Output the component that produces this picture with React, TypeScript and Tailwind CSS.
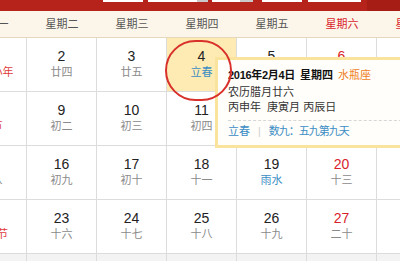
import React from 'react';

type Day = {
  n: number;
  lunar: string;
  kind?: 'fest' | 'term';
  weekend?: boolean;
  selected?: boolean;
  other?: boolean;
};

const weekdays = ['星期一', '星期二', '星期三', '星期四', '星期五', '星期六', '星期日'];

const rows: Day[][] = [
  [
    { n: 1, lunar: '北方小年', kind: 'fest' },
    { n: 2, lunar: '廿四' },
    { n: 3, lunar: '廿五' },
    { n: 4, lunar: '立春', kind: 'term', selected: true },
    { n: 5, lunar: '廿七' },
    { n: 6, lunar: '廿八', weekend: true },
    { n: 7, lunar: '除夕', kind: 'fest', weekend: true },
  ],
  [
    { n: 8, lunar: '春节', kind: 'fest' },
    { n: 9, lunar: '初二' },
    { n: 10, lunar: '初三' },
    { n: 11, lunar: '初四' },
    { n: 12, lunar: '初五' },
    { n: 13, lunar: '初六', weekend: true },
    { n: 14, lunar: '情人节', kind: 'fest', weekend: true },
  ],
  [
    { n: 15, lunar: '初八' },
    { n: 16, lunar: '初九' },
    { n: 17, lunar: '初十' },
    { n: 18, lunar: '十一' },
    { n: 19, lunar: '雨水', kind: 'term' },
    { n: 20, lunar: '十三', weekend: true },
    { n: 21, lunar: '十四', weekend: true },
  ],
  [
    { n: 22, lunar: '元宵节', kind: 'fest' },
    { n: 23, lunar: '十六' },
    { n: 24, lunar: '十七' },
    { n: 25, lunar: '十八' },
    { n: 26, lunar: '十九' },
    { n: 27, lunar: '二十', weekend: true },
    { n: 28, lunar: '廿一', weekend: true },
  ],
  [
    { n: 29, lunar: '廿二', other: true },
    { n: 1, lunar: '廿三', other: true },
    { n: 2, lunar: '廿四', other: true },
    { n: 3, lunar: '廿五', other: true },
    { n: 4, lunar: '廿六', other: true },
    { n: 5, lunar: '惊蛰', other: true },
    { n: 6, lunar: '廿八', other: true },
  ],
];

const DayCell: React.FC<{ day: Day }> = ({ day }) => {
  const bg = day.selected ? 'bg-[#fdebb3]' : day.other ? 'bg-[#f3f3f3]' : 'bg-white';
  const lunarColor =
    day.kind === 'fest' ? 'text-[#e03c3c]' : day.kind === 'term' ? 'text-[#3b8dc4]' : 'text-[#8a8a8a]';
  return (
    <div className={`h-[54px] border-r border-b border-[#dcdcdc] pt-[10px] flex flex-col items-center ${bg}`}>
      <span className={`h-[16px] leading-[16px] text-[14px] ${day.weekend ? 'text-[#d9232b]' : 'text-[#222]'}`}>
        {day.n}
      </span>
      <span className={`mt-[1px] h-[14px] leading-[14px] text-[11px] whitespace-nowrap ${lunarColor}`}>
        {day.lunar}
      </span>
    </div>
  );
};

export default function App() {
  return (
    <div className="relative w-[400px] h-[261px] overflow-hidden bg-white font-['Liberation_Sans','Noto_Sans_CJK_SC',sans-serif]">
      {/* top toolbar, only the bottom of its inputs shows */}
      <div className="h-[11px] bg-[#b6231a] flex items-start pl-[103px]">
        <div className="w-[40px] h-[2px] bg-white" />
        <div className="ml-[5px] w-[60px] h-[2px] bg-white flex justify-end">
          <div className="w-[11px] h-[2px] bg-[#c9c9c9]" />
        </div>
        <div className="ml-[4px] w-[41px] h-[2px] bg-white flex justify-end">
          <div className="w-[13px] h-[2px] bg-[#c9c9c9]" />
        </div>
        <div className="ml-[9px] w-[40px] h-[2px] bg-white" />
        <div className="ml-[6px] w-[53px] h-[2px] bg-white" />
        <div className="ml-[6px] flex-1 h-[11px] bg-[#a51d14]" />
      </div>

      <div className="ml-[-43px] w-[490px]">
        <div className="grid grid-cols-[repeat(7,70px)] h-[27px] bg-[#fcf5e9] border-b border-[#e6d8bd]">
          {weekdays.map((w, i) => (
            <div
              key={w}
              className={`flex items-center justify-center text-[11px] ${i >= 5 ? 'text-[#d9232b]' : 'text-[#555]'}`}
            >
              {w}
            </div>
          ))}
        </div>
        {rows.map((row, r) => (
          <div key={r} className="grid grid-cols-[repeat(7,70px)]">
            {row.map((d, c) => (
              <DayCell key={c} day={d} />
            ))}
          </div>
        ))}
      </div>

      {/* detail popup */}
      <div className="absolute left-[215px] top-[57px] w-[210px] h-[91px] border-[3px] border-[#f9e39d] bg-[#fffefa] pl-[10px] pt-[8px] text-[11px] text-[#333]">
        <div className="h-[15px] leading-[15px] flex items-center whitespace-nowrap">
          <span className="font-bold text-[#111] tracking-[-0.3px]">2016年2月4日</span>
          <span className="ml-[5px] font-bold text-[#111]">星期四</span>
          <span className="ml-[5px] text-[#ef7d22]">水瓶座</span>
        </div>
        <div className="mt-[2px] h-[15px] leading-[15px]">农历腊月廿六</div>
        <div className="h-[14px] leading-[14px] whitespace-nowrap">丙申年&nbsp;&nbsp;庚寅月&nbsp;丙辰日</div>
        <div className="mt-[6px] border-t border-dashed border-[#d6d6d6] pt-[6px] h-[14px] leading-[14px] flex items-center whitespace-nowrap text-[#3b8dc4]">
          <span>立春</span>
          <span className="mx-[8px] text-[#d0d0d0]">|</span>
          <span className="tracking-[-1px]">数九：五九第九天</span>
        </div>
      </div>

      {/* today ring */}
      <div className="absolute left-[165px] top-[40px] w-[67px] h-[61px] rounded-full border-2 border-[#d8302b]" />
    </div>
  );
}
